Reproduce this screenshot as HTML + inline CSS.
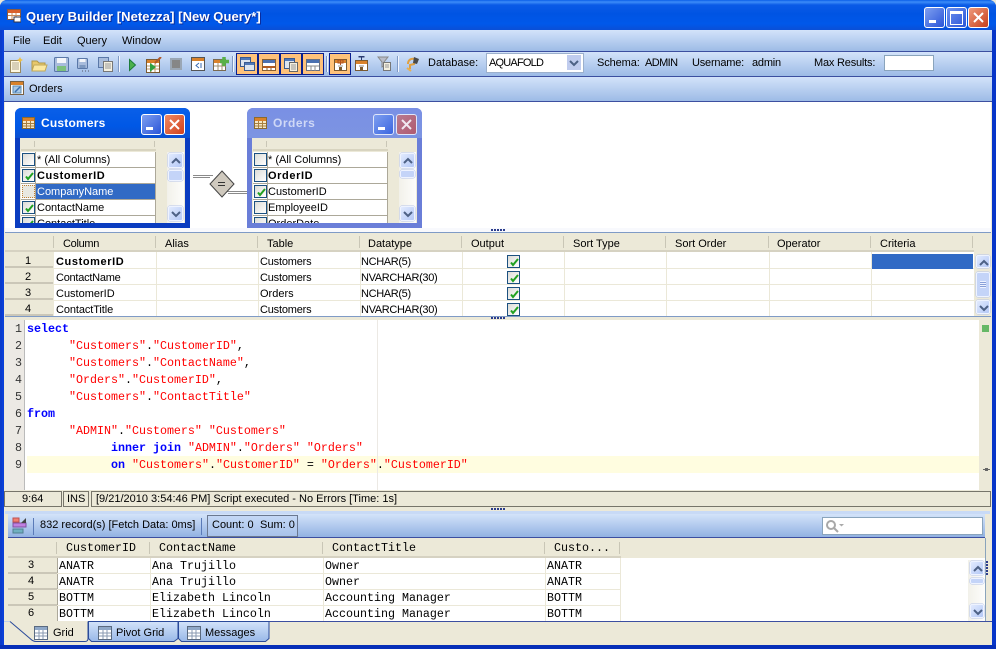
<!DOCTYPE html>
<html><head><meta charset="utf-8"><style>
html,body{margin:0;padding:0;width:996px;height:649px;overflow:hidden;background:#ece9d8}
body{position:relative;font:11px/16px "Liberation Sans",sans-serif;color:#000}
div,span.t,svg{position:absolute}
.t{position:absolute;white-space:pre;line-height:16px;height:16px;margin-top:1px}
.m{font-family:"Liberation Mono",monospace;font-size:11.67px}
.b{font-weight:bold;letter-spacing:.6px}
.n{letter-spacing:-.35px}
.bar{left:4px;width:988px;background:linear-gradient(#d3e3fa,#9dbbe6)}
.ln{background:#3c4fa0;height:1px;left:4px;width:988px}
.hd{background:#ece9d8}
.vs{width:1px;background:#ebe8d8}
.hs{height:1px;background:#ebe8d8}
.sep{width:1px;height:12px;background:#c9c6b6}
.ts{width:1px;height:16px;top:56px;background:#7f99c4;box-shadow:1px 0 #f2f6ff}
.sb{background:linear-gradient(90deg,#f2f1ea,#fdfdfb)}
.btn{width:14px;height:14px;background:linear-gradient(135deg,#e1eafe,#b4c8f6);border:1px solid #eef3ff;border-radius:2px;box-sizing:border-box;box-shadow:0 0 0 .5px #b6c4e8}
.w15{width:15px;height:15px}
.btn svg{left:2px;top:3px}
.cb{width:13px;height:13px;box-sizing:border-box;border:1px solid #1c5180;background:linear-gradient(135deg,#dcdcd7,#fff)}
.cb svg{left:1px;top:1px}
.dots{width:14px;height:2px;background:repeating-linear-gradient(90deg,#2b3c8c 0 2px,transparent 2px 3px)}
.on{width:22px;height:22px;box-sizing:border-box;border:1px solid #0a1f8f;background:#ffc27a;top:53px}
.code{color:#f00}
.kw{color:#00f;font-weight:bold}
.dk{color:#000}
.tb{width:16px;height:16px}
</style></head><body>
<svg width="0" height="0" style="position:absolute"><defs>
<linearGradient id="tg" x1="0" y1="0" x2="0" y2="1"><stop offset="0" stop-color="#d3e3fa"/><stop offset="1" stop-color="#98b8e8"/></linearGradient>
<symbol id="chk" viewBox="0 0 11 11"><path d="M2 5.500l2 2.500 5-6" fill="none" stroke="#21a121" stroke-width="2"/></symbol>
<symbol id="up" viewBox="0 0 10 8"><path d="M1 6l4-4 4 4" fill="none" stroke="#4d6185" stroke-width="2"/></symbol>
<symbol id="dn" viewBox="0 0 10 8"><path d="M1 2l4 4 4-4" fill="none" stroke="#4d6185" stroke-width="2"/></symbol>
<symbol id="win" viewBox="0 0 16 16"><rect x="1.500" y="1.500" width="13" height="13" fill="#fff" stroke="#5a6a80"/><rect x="2" y="2" width="12" height="3" fill="#8fa8c8"/><path d="M2 8h12M2 11h12M6 5v9M10 5v9" stroke="#8a9ab0" fill="none"/></symbol>
</defs></svg>

<!-- frame -->
<div style="left:0;top:0;width:996px;height:649px;background:#0a3fd8;border-radius:7px 7px 0 0"></div>
<div style="left:0;top:0;width:996px;height:30px;background:linear-gradient(#0a5fe8 0,#3c8cf8 2px,#0a5ae6 5px,#0054e3 14px,#0058ea 24px,#0a4fd6 30px);border-radius:7px 7px 0 0"></div>
<div style="left:0;top:30px;width:2px;height:619px;background:#0a3ccc"></div>
<div style="left:992px;top:30px;width:4px;height:619px;background:#0735c8"></div>
<div style="left:0;top:645px;width:996px;height:4px;background:#062fb8"></div>
<div style="left:4px;top:30px;width:988px;height:615px;background:#ece9d8"></div>

<svg style="left:7px;top:9px" width="14" height="14" viewBox="0 0 14 14"><rect x=".5" y=".5" width="13" height="10" fill="#fff" stroke="#8a5a40"/><rect x="1" y="1" width="12" height="3" fill="#d9602b"/><path d="M1 6.500h12M5 4v6M9 4v6" stroke="#c88a5a"/><rect x="7" y="8" width="7" height="5" fill="#fff" stroke="#334"/></svg>
<span class="t" style="left:26px;top:8px;font-size:13px;font-weight:bold;color:#fff;text-shadow:1px 1px #0a2c9c;letter-spacing:.08px">Query Builder [Netezza] [New Query*]</span>

<!-- caption buttons -->
<div style="left:924px;top:7px;width:19px;height:19px;background:linear-gradient(135deg,#7f9ff0,#2a55d8);border:1px solid #fff;border-radius:3px"><div style="left:4px;top:12px;width:7px;height:3px;background:#fff"></div></div>
<div style="left:946px;top:7px;width:19px;height:19px;background:linear-gradient(135deg,#6f92ee,#2a55d8);border:1px solid #fff;border-radius:3px"><div style="left:3px;top:3px;width:11px;height:10px;border:1px solid #fff;border-top:3px solid #fff"></div></div>
<div style="left:968px;top:7px;width:19px;height:19px;background:linear-gradient(135deg,#ee9a7c,#c8401c);border:1px solid #fff;border-radius:3px"><svg style="left:4px;top:4px" width="11" height="11"><path d="M1 1l9 9M10 1l-9 9" stroke="#fff" stroke-width="2"/></svg></div>

<!-- bars -->
<div class="bar" style="top:30px;height:21px"></div><div class="ln" style="top:51px"></div>
<div class="bar" style="top:52px;height:24px"></div><div class="ln" style="top:76px"></div>
<div class="bar" style="top:77px;height:24px"></div><div class="ln" style="top:101px"></div>
<span class="t" style="left:13px;top:32px">File</span>
<span class="t" style="left:43px;top:32px">Edit</span>
<span class="t" style="left:77px;top:32px">Query</span>
<span class="t" style="left:122px;top:32px">Window</span>

<!-- toolbar icons -->
<svg style="left:10px;top:57px" width="14" height="16"><rect x=".5" y="3.500" width="10" height="12" fill="#fff8e0" stroke="#9a8a60"/><path d="M2 6h7M2 8h7M2 10h7M2 12h7" stroke="#b0a890"/><path d="M10 0l1 2 2 1-2 1-1 2-1-2-2-1 2-1z" fill="#f0c040"/></svg>
<svg style="left:31px;top:58px" width="17" height="14"><path d="M1 3h5l2 2h6v8H1z" fill="#e8c86a" stroke="#b09848"/><path d="M3 7h13l-2 6H1z" fill="#fbe8a0" stroke="#c0a858"/></svg>
<svg style="left:54px;top:57px" width="15" height="15"><rect x=".5" y=".5" width="14" height="14" rx="1" fill="#a8bcdc" stroke="#5a78a8"/><rect x="3" y="1" width="9" height="5" fill="#f4f6fa"/><rect x="3" y="9" width="9" height="5" fill="#7cc07c"/></svg>
<svg style="left:77px;top:58px" width="15" height="15"><rect x=".5" y=".5" width="10" height="10" rx="1" fill="#a8bcdc" stroke="#5a78a8"/><rect x="2.500" y="1" width="6" height="3" fill="#f4f6fa"/><rect x="2.500" y="7" width="6" height="3" fill="#7c98c0"/><path d="M5 13h1M8 13h1M11 13h1" stroke="#556"/></svg>
<svg style="left:98px;top:57px" width="16" height="16"><rect x=".5" y=".5" width="10" height="10" fill="#a8bcdc" stroke="#5a78a8"/><rect x="5.500" y="4.500" width="9" height="10" fill="#f4f0e0" stroke="#777"/><path d="M7 7h6M7 9h6M7 11h6" stroke="#999"/></svg>
<div class="ts" style="left:118px"></div>
<svg style="left:128px;top:58px" width="9" height="14"><path d="M1.500 1.500l6 5.500-6 5.500z" fill="#4cb04c" stroke="#1c7c3c"/></svg>
<svg style="left:146px;top:57px" width="16" height="16"><rect x=".5" y="2.500" width="13" height="13" fill="#fff" stroke="#7a5a30"/><rect x="1" y="3" width="12" height="3" fill="#d9822b"/><path d="M1 9h12M1 12h12M5 6v9M9 6v9" stroke="#c09a6a"/><path d="M4 6l6 4-6 5z" fill="#30a040"/><path d="M9 6l6-6" stroke="#b05a2a" stroke-width="2"/></svg>
<svg style="left:170px;top:58px" width="12" height="12"><rect width="12" height="12" fill="#9aa6b4"/><rect x="2" y="2" width="8" height="8" fill="#868686"/></svg>
<svg style="left:191px;top:57px" width="14" height="14"><rect x=".5" y=".5" width="13" height="13" fill="#fff" stroke="#555"/><rect x="1" y="1" width="12" height="3" fill="#d9822b"/><path d="M8 6L5 8.500l3 2.500M10 6v5" stroke="#3a6ab0" fill="none"/></svg>
<svg style="left:213px;top:56px" width="16" height="16"><rect x=".5" y="3.500" width="12" height="11" fill="#fff" stroke="#7a6a50"/><rect x="1" y="4" width="11" height="3" fill="#d9822b"/><path d="M1 10h12M5 7v7M9 7v7" stroke="#a09070"/><path d="M11 1v9M7 5.500h9" stroke="#58b048" stroke-width="3.500"/></svg>
<div class="ts" style="left:232px"></div>

<div class="on" style="left:236px"><svg style="left:3px;top:3px" width="16" height="16"><rect x=".5" y=".5" width="10" height="9" fill="#dce4f0" stroke="#3a5a90"/><rect x="1" y="1" width="9" height="2" fill="#5078b8"/><rect x="4.500" y="5.500" width="10" height="8" fill="#dce4f0" stroke="#3a5a90"/><rect x="5" y="6" width="9" height="2" fill="#5078b8"/></svg></div>
<div class="on" style="left:258px"><svg style="left:3px;top:3px" width="16" height="16"><rect x=".5" y="2.500" width="13" height="11" fill="#fff" stroke="#8a6030"/><rect x="1" y="3" width="12" height="3" fill="#4a70b0"/><rect x="1" y="9" width="12" height="2" fill="#b05a20"/><path d="M5 11v3M9 11v3" stroke="#8a6030"/></svg></div>
<div class="on" style="left:280px"><svg style="left:3px;top:3px" width="16" height="16"><rect x=".5" y="1.500" width="10" height="10" fill="#dce4f0" stroke="#3a5a90"/><rect x="1" y="2" width="9" height="2" fill="#5078b8"/><rect x="5.500" y="5.500" width="8" height="9" fill="#f4f0e0" stroke="#666"/><path d="M7 8h5M7 10h5M7 12h5" stroke="#999"/></svg></div>
<div class="on" style="left:302px"><svg style="left:3px;top:3px" width="16" height="16"><rect x=".5" y="2.500" width="13" height="11" fill="#fff" stroke="#6a7080"/><rect x="1" y="3" width="12" height="3" fill="#4a70b0"/><path d="M1 9h12M5 9v5M9 9v5" stroke="#8a8a8a"/></svg></div>
<div class="ts" style="left:326px"></div>
<div class="on" style="left:329px"><svg style="left:3px;top:3px" width="16" height="16"><rect x="1.500" y="2.500" width="12" height="11" fill="#fff" stroke="#7a5a30"/><rect x="2" y="3" width="11" height="3" fill="#d9822b"/><path d="M7.500 3v5M5 3h5v3H5z" stroke="#b05020" fill="none"/><path d="M5 9h5" stroke="#999"/><rect x="6" y="10" width="3" height="3" fill="#7a5a30"/></svg></div>
<svg style="left:354px;top:56px" width="16" height="16"><rect x="1.500" y="4.500" width="12" height="10" fill="#fff" stroke="#7a5a30"/><rect x="2" y="5" width="11" height="3" fill="#d9822b"/><path d="M5 0h5v1H5zM7.500 1v3" stroke="#2a3a70"/><path d="M5 10h5" stroke="#888"/><rect x="6" y="11" width="3" height="3" fill="#7a5a30"/></svg>
<svg style="left:377px;top:56px" width="16" height="16"><path d="M1 1h10L7 6v4L5 11V6z" fill="#b8bcc8" stroke="#888"/><rect x="6.500" y="6.500" width="7" height="8" fill="#f4f0e0" stroke="#777"/><path d="M8 9h4M8 11h4" stroke="#999"/></svg>
<div class="ts" style="left:397px"></div>
<svg style="left:405px;top:55px" width="16" height="17"><path d="M3 9c0-4 3-6 7-5l-1 5-4 1 0 4" fill="none" stroke="#e0a040" stroke-width="2"/><path d="M9 2l5 2-2 5-4-1z" fill="#4a4a4a"/><path d="M2 13l4 3" stroke="#e8b050" stroke-width="2"/></svg>

<span class="t" style="left:428px;top:54px">Database:</span>
<div style="left:486px;top:53px;width:96px;height:18px;background:#fff;border:1px solid #9cb0cc"></div>
<span class="t" style="left:489px;top:54px;letter-spacing:-.8px">AQUAFOLD</span>
<div style="left:567px;top:55px;width:14px;height:15px;background:#c0ccee"><svg style="left:2px;top:4px" width="10" height="8"><use href="#dn"/></svg></div>
<span class="t" style="left:597px;top:54px;letter-spacing:-.1px">Schema:</span>
<span class="t" style="left:645px;top:54px;letter-spacing:-.6px">ADMIN</span>
<span class="t" style="left:692px;top:54px;letter-spacing:-.2px">Username:</span>
<span class="t" style="left:752px;top:54px;letter-spacing:-.2px">admin</span>
<span class="t" style="left:814px;top:54px;letter-spacing:-.2px">Max Results:</span>
<div style="left:884px;top:55px;width:48px;height:14px;background:#fff;border:1px solid #8aa4bc"></div>

<svg style="left:10px;top:81px" width="15" height="15"><rect x=".5" y=".5" width="13" height="13" fill="#fff" stroke="#7a6040"/><rect x="1" y="1" width="12" height="3" fill="#d9822b"/><rect x="3" y="5" width="8" height="7" fill="#a8c8e8" stroke="#5a8ab0"/><path d="M5 11l5-5" stroke="#3a70b0" stroke-width="1.500"/></svg>
<span class="t" style="left:29px;top:80px">Orders</span>

<!-- canvas -->
<div style="left:5px;top:102px;width:986px;height:126px;background:#fff"></div>

<!-- customers window -->
<div style="left:15px;top:108px;width:175px;height:120px;background:#0a3cc0;border-radius:6px 6px 0 0"></div>
<div style="left:15px;top:108px;width:175px;height:30px;background:linear-gradient(#0a5fe8,#0058e6 60%,#0a4fd0);border-radius:6px 6px 0 0"></div>
<svg style="left:22px;top:117px" width="13" height="12"><rect x=".5" y=".5" width="12" height="11" fill="#f4e8c8" stroke="#8a6a30"/><rect x="1" y="1" width="11" height="3" fill="#d9822b"/><path d="M1 6.500h11M1 9h11M4.500 4v7M8.500 4v7" stroke="#a88040"/></svg>
<span class="t" style="left:41px;top:114px;font-size:12px;font-weight:bold;color:#fff;letter-spacing:.2px">Customers</span>
<div style="left:141px;top:114px;width:19px;height:19px;background:linear-gradient(135deg,#7f9ff0,#2a55d8);border:1px solid #fff;border-radius:3px"><div style="left:4px;top:12px;width:7px;height:3px;background:#fff"></div></div>
<div style="left:164px;top:114px;width:19px;height:19px;background:linear-gradient(135deg,#ee8a64,#d0401c);border:1px solid #fff;border-radius:3px"><svg style="left:4px;top:4px" width="11" height="11"><path d="M1 1l9 9M10 1l-9 9" stroke="#fff" stroke-width="2"/></svg></div>
<div style="left:20px;top:138px;width:165px;height:85px;background:#ece9d8"></div>
<div style="left:21px;top:152px;width:135px;height:71px;background:#fff"></div>
<div style="left:21px;top:149px;width:135px;height:2px;background:#d8d4c0"></div>
<div class="sep" style="left:34px;top:141px;height:6px"></div>
<div class="sep" style="left:154px;top:141px;height:6px"></div>
<div style="left:21px;top:167px;width:135px;height:1px;background:#aca899"></div>
<div style="left:21px;top:183px;width:135px;height:1px;background:#aca899"></div>
<div style="left:21px;top:199px;width:135px;height:1px;background:#aca899"></div>
<div style="left:21px;top:215px;width:135px;height:1px;background:#aca899"></div>
<div style="left:35px;top:152px;width:1px;height:71px;background:#aca899"></div>
<div style="left:155px;top:152px;width:1px;height:71px;background:#aca899"></div>
<div style="left:36px;top:184px;width:119px;height:15px;background:#316ac5"></div>
<span class="t" style="left:37px;top:151px">* (All Columns)</span>
<span class="t b" style="left:37px;top:167px">CustomerID</span>
<span class="t" style="left:37px;top:183px;color:#fff">CompanyName</span>
<span class="t" style="left:37px;top:199px">ContactName</span>
<div style="left:36px;top:216px;width:90px;height:7px;overflow:hidden"><span class="t" style="left:1px;top:-1px">ContactTitle</span></div>
<div class="cb" style="left:22px;top:153px"></div>
<div class="cb" style="left:22px;top:169px"><svg width="11" height="11"><use href="#chk"/></svg></div>
<div class="cb" style="left:22px;top:185px;border:1px dotted #c08030;background:#e8e8e0"></div>
<div class="cb" style="left:22px;top:201px"><svg width="11" height="11"><use href="#chk"/></svg></div>
<div style="left:22px;top:217px;width:13px;height:6px;overflow:hidden"><div class="cb" style="left:0;top:0"><svg width="11" height="11"><use href="#chk"/></svg></div></div>
<div class="sb" style="left:167px;top:152px;width:17px;height:71px"></div>
<div class="btn w15" style="left:168px;top:153px"><svg width="10" height="8"><use href="#up"/></svg></div>
<div class="btn" style="left:168px;top:170px;width:15px;height:11px;background:#c4d4f8"></div>
<div class="btn w15" style="left:168px;top:206px"><svg width="10" height="8"><use href="#dn"/></svg></div>

<!-- orders window -->
<div style="left:247px;top:108px;width:175px;height:120px;background:#6a7ed8;border-radius:6px 6px 0 0"></div>
<div style="left:247px;top:108px;width:175px;height:30px;background:linear-gradient(#7a90e4,#7c94e2);border-radius:6px 6px 0 0"></div>
<svg style="left:254px;top:117px" width="13" height="12"><rect x=".5" y=".5" width="12" height="11" fill="#f4e8c8" stroke="#8a6a30"/><rect x="1" y="1" width="11" height="3" fill="#d9822b"/><path d="M1 6.500h11M1 9h11M4.500 4v7M8.500 4v7" stroke="#a88040"/></svg>
<span class="t" style="left:273px;top:114px;font-size:12px;font-weight:bold;color:#cfd8f6;letter-spacing:.5px">Orders</span>
<div style="left:373px;top:114px;width:19px;height:19px;background:linear-gradient(135deg,#7f9ff0,#3a65e0);border:1px solid #dfe6fa;border-radius:3px"><div style="left:4px;top:12px;width:7px;height:3px;background:#fff"></div></div>
<div style="left:396px;top:114px;width:19px;height:19px;background:linear-gradient(135deg,#b87a90,#b05a70);border:1px solid #dfe6fa;border-radius:3px"><svg style="left:4px;top:4px" width="11" height="11"><path d="M1 1l9 9M10 1l-9 9" stroke="#f0e8f0" stroke-width="2"/></svg></div>
<div style="left:252px;top:138px;width:165px;height:85px;background:#ece9d8"></div>
<div style="left:253px;top:152px;width:135px;height:71px;background:#fff"></div>
<div style="left:253px;top:149px;width:135px;height:2px;background:#d8d4c0"></div>
<div class="sep" style="left:266px;top:141px;height:6px"></div>
<div class="sep" style="left:386px;top:141px;height:6px"></div>
<div style="left:253px;top:167px;width:135px;height:1px;background:#aca899"></div>
<div style="left:253px;top:183px;width:135px;height:1px;background:#aca899"></div>
<div style="left:253px;top:199px;width:135px;height:1px;background:#aca899"></div>
<div style="left:253px;top:215px;width:135px;height:1px;background:#aca899"></div>
<div style="left:267px;top:152px;width:1px;height:71px;background:#aca899"></div>
<div style="left:387px;top:152px;width:1px;height:71px;background:#aca899"></div>
<span class="t" style="left:268px;top:151px">* (All Columns)</span>
<span class="t b" style="left:268px;top:167px">OrderID</span>
<span class="t" style="left:268px;top:183px">CustomerID</span>
<span class="t" style="left:268px;top:199px">EmployeeID</span>
<div style="left:268px;top:216px;width:90px;height:7px;overflow:hidden"><span class="t" style="left:0;top:-1px">OrderDate</span></div>
<div class="cb" style="left:254px;top:153px"></div>
<div class="cb" style="left:254px;top:169px"></div>
<div class="cb" style="left:254px;top:185px"><svg width="11" height="11"><use href="#chk"/></svg></div>
<div class="cb" style="left:254px;top:201px"></div>
<div style="left:254px;top:217px;width:13px;height:6px;overflow:hidden"><div class="cb" style="left:0;top:0"></div></div>
<div class="sb" style="left:399px;top:152px;width:17px;height:71px"></div>
<div class="btn w15" style="left:400px;top:153px"><svg width="10" height="8"><use href="#up"/></svg></div>
<div class="btn" style="left:400px;top:170px;width:15px;height:8px;background:#c4d4f8"></div>
<div class="btn w15" style="left:400px;top:206px"><svg width="10" height="8"><use href="#dn"/></svg></div>

<!-- join -->
<svg style="left:190px;top:168px" width="60" height="32"><path d="M3 7.500h20M3 9.500h17M36 23.500h21M38 25.500h19" stroke="#8a8a8a" fill="none"/><path d="M32 3l12 13-12 13-12-13z" fill="#cfc9be" stroke="#444"/><path d="M28 14.500h7M28 17.500h7" stroke="#333"/></svg>

<!-- splitter 1 -->
<div style="left:5px;top:228px;width:986px;height:5px;background:#f8f9fd"></div>
<div style="left:5px;top:232px;width:986px;height:1px;background:#7f9bc6"></div>
<div class="dots" style="left:491px;top:229px"></div>

<!-- query grid -->
<div class="hd" style="left:5px;top:233px;width:986px;height:83px"></div>
<div style="left:54px;top:252px;width:920px;height:64px;background:#fff"></div>
<div style="left:5px;top:250px;width:969px;height:2px;background:#d6d2c2"></div>
<div class="hs" style="left:54px;top:268px;width:920px"></div>
<div class="hs" style="left:54px;top:284px;width:920px"></div>
<div class="hs" style="left:54px;top:300px;width:920px"></div>
<div class="vs" style="left:156px;top:252px;height:64px"></div>
<div class="vs" style="left:258px;top:252px;height:64px"></div>
<div class="vs" style="left:360px;top:252px;height:64px"></div>
<div class="vs" style="left:462px;top:252px;height:64px"></div>
<div class="vs" style="left:564px;top:252px;height:64px"></div>
<div class="vs" style="left:666px;top:252px;height:64px"></div>
<div class="vs" style="left:769px;top:252px;height:64px"></div>
<div class="vs" style="left:871px;top:252px;height:64px"></div>
<div class="sep" style="left:53px;top:236px"></div>
<div class="sep" style="left:155px;top:236px"></div>
<div class="sep" style="left:257px;top:236px"></div>
<div class="sep" style="left:359px;top:236px"></div>
<div class="sep" style="left:461px;top:236px"></div>
<div class="sep" style="left:563px;top:236px"></div>
<div class="sep" style="left:665px;top:236px"></div>
<div class="sep" style="left:768px;top:236px"></div>
<div class="sep" style="left:870px;top:236px"></div>
<div class="sep" style="left:972px;top:236px"></div>
<span class="t" style="left:63px;top:235px;letter-spacing:-.3px">Column</span>
<span class="t" style="left:165px;top:235px">Alias</span>
<span class="t" style="left:267px;top:235px">Table</span>
<span class="t" style="left:368px;top:235px">Datatype</span>
<span class="t" style="left:471px;top:235px">Output</span>
<span class="t" style="left:573px;top:235px">Sort Type</span>
<span class="t" style="left:675px;top:235px">Sort Order</span>
<span class="t" style="left:777px;top:235px">Operator</span>
<span class="t" style="left:880px;top:235px">Criteria</span>
<div style="left:5px;top:266px;width:48px;height:2px;background:#cbc7b8"></div>
<div style="left:5px;top:282px;width:48px;height:2px;background:#cbc7b8"></div>
<div style="left:5px;top:298px;width:48px;height:2px;background:#cbc7b8"></div>
<div style="left:5px;top:314px;width:48px;height:2px;background:#cbc7b8"></div>
<span class="t" style="left:25px;top:252px">1</span>
<span class="t" style="left:25px;top:268px">2</span>
<span class="t" style="left:25px;top:284px">3</span>
<span class="t" style="left:25px;top:300px">4</span>
<span class="t b" style="left:56px;top:253px">CustomerID</span>
<span class="t" style="left:56px;top:269px;letter-spacing:-.25px">ContactName</span>
<span class="t" style="left:56px;top:285px">CustomerID</span>
<span class="t" style="left:56px;top:301px;letter-spacing:-.1px">ContactTitle</span>
<span class="t" style="left:260px;top:253px;letter-spacing:-.2px">Customers</span>
<span class="t" style="left:260px;top:269px;letter-spacing:-.2px">Customers</span>
<span class="t" style="left:260px;top:285px">Orders</span>
<span class="t" style="left:260px;top:301px;letter-spacing:-.2px">Customers</span>
<span class="t n" style="left:361px;top:253px">NCHAR(5)</span>
<span class="t n" style="left:361px;top:269px">NVARCHAR(30)</span>
<span class="t n" style="left:361px;top:285px">NCHAR(5)</span>
<span class="t n" style="left:361px;top:301px">NVARCHAR(30)</span>
<div class="cb" style="left:507px;top:255px"><svg width="11" height="11"><use href="#chk"/></svg></div>
<div class="cb" style="left:507px;top:271px"><svg width="11" height="11"><use href="#chk"/></svg></div>
<div class="cb" style="left:507px;top:287px"><svg width="11" height="11"><use href="#chk"/></svg></div>
<div class="cb" style="left:507px;top:303px"><svg width="11" height="11"><use href="#chk"/></svg></div>
<div style="left:872px;top:254px;width:101px;height:15px;background:#316ac5"></div>
<div class="btn" style="left:976px;top:255px;height:13px"><svg width="10" height="8"><use href="#up"/></svg></div>
<div class="btn" style="left:976px;top:272px;height:25px;background:#c4d4f8"><div style="left:3px;top:8px;width:6px;height:7px;background:repeating-linear-gradient(#eef3ff 0 1px,#8aa0d8 1px 2px)"></div></div>
<div class="btn" style="left:976px;top:300px"><svg width="10" height="8"><use href="#dn"/></svg></div>

<!-- splitter 2 -->
<div style="left:5px;top:316px;width:986px;height:1px;background:#7f9bc6"></div>
<div class="dots" style="left:491px;top:317px"></div>

<!-- editor -->
<div style="left:5px;top:320px;width:974px;height:170px;background:#fff"></div>
<div style="left:5px;top:320px;width:19px;height:170px;background:#ece9e4"></div>
<div style="left:24px;top:320px;width:1px;height:170px;background:#bbb"></div>
<div style="left:979px;top:320px;width:12px;height:170px;background:#ece9d8"></div>
<div style="left:982px;top:325px;width:7px;height:7px;background:#66b866"></div>
<div style="left:983px;top:469px;width:7px;height:1px;background:#666"></div>
<div style="left:985px;top:468px;width:3px;height:3px;background:#666"></div>
<div style="left:27px;top:456px;width:952px;height:17px;background:#fffde0"></div>
<div style="left:377px;top:320px;width:1px;height:170px;background:#ece9e4"></div>
<span class="t m" style="left:15px;top:320px;color:#333">1</span>
<span class="t m" style="left:15px;top:337px;color:#333">2</span>
<span class="t m" style="left:15px;top:354px;color:#333">3</span>
<span class="t m" style="left:15px;top:371px;color:#333">4</span>
<span class="t m" style="left:15px;top:388px;color:#333">5</span>
<span class="t m" style="left:15px;top:405px;color:#333">6</span>
<span class="t m" style="left:15px;top:422px;color:#333">7</span>
<span class="t m" style="left:15px;top:439px;color:#333">8</span>
<span class="t m" style="left:15px;top:456px;color:#333">9</span>
<span class="t m kw" style="left:27px;top:320px">select</span>
<span class="t m code" style="left:69px;top:337px">"Customers"<span class="dk">.</span>"CustomerID"<span class="dk">,</span></span>
<span class="t m code" style="left:69px;top:354px">"Customers"<span class="dk">.</span>"ContactName"<span class="dk">,</span></span>
<span class="t m code" style="left:69px;top:371px">"Orders"<span class="dk">.</span>"CustomerID"<span class="dk">,</span></span>
<span class="t m code" style="left:69px;top:388px">"Customers"<span class="dk">.</span>"ContactTitle"</span>
<span class="t m kw" style="left:27px;top:405px">from</span>
<span class="t m code" style="left:69px;top:422px">"ADMIN"<span class="dk">.</span>"Customers" "Customers"</span>
<span class="t m code" style="left:111px;top:439px"><span class="kw">inner join</span> "ADMIN"<span class="dk">.</span>"Orders" "Orders"</span>
<span class="t m code" style="left:111px;top:456px"><span class="kw">on</span> "Customers"<span class="dk">.</span>"CustomerID" <span class="dk">=</span> "Orders"<span class="dk">.</span>"CustomerID"</span>

<!-- status bar -->
<div style="left:4px;top:490px;width:988px;height:21px;background:#ece9d8"></div>
<div style="left:4px;top:491px;width:56px;height:14px;border:1px solid #77756a"></div>
<div style="left:63px;top:491px;width:24px;height:14px;border:1px solid #77756a"></div>
<div style="left:91px;top:491px;width:898px;height:14px;border:1px solid #77756a"></div>
<span class="t" style="left:22px;top:490px">9:64</span>
<span class="t" style="left:67px;top:490px">INS</span>
<span class="t" style="left:96px;top:490px">[9/21/2010 3:54:46 PM] Script executed - No Errors [Time: 1s]</span>
<div class="dots" style="left:491px;top:508px"></div>

<!-- results -->
<div style="left:5px;top:511px;width:985px;height:3px;background:#c8daf6"></div>
<div style="left:8px;top:514px;width:977px;height:23px;background:linear-gradient(#d3e3fa,#92b2e2)"></div>
<div style="left:8px;top:537px;width:977px;height:1px;background:#3c4fa0"></div>
<svg style="left:12px;top:517px" width="17" height="19"><rect x="1" y="1" width="6" height="4" fill="#f08070" stroke="#c05050"/><rect x="1" y="6" width="13" height="4" fill="#c080e0" stroke="#8050a0"/><rect x="1" y="12" width="10" height="4" fill="#70b0c0" stroke="#508090"/><path d="M14 1v5l-5 0z" fill="#444"/></svg>
<div style="left:33px;top:518px;width:1px;height:17px;background:#5a7ab8"></div>
<span class="t" style="left:40px;top:516px">832 record(s) [Fetch Data: 0ms]</span>
<div style="left:201px;top:518px;width:1px;height:17px;background:#5a7ab8"></div>
<div style="left:207px;top:515px;width:89px;height:20px;border:1px solid #6a7890;background:linear-gradient(#c4d8f6,#a8c2ea)"></div>
<span class="t" style="left:212px;top:516px">Count: 0</span>
<span class="t" style="left:260px;top:516px">Sum: 0</span>
<div style="left:822px;top:517px;width:159px;height:16px;background:#fff;border:1px solid #8aa4bc"></div>
<svg style="left:825px;top:519px" width="20" height="14"><circle cx="6" cy="6" r="4" fill="none" stroke="#a8a8a8" stroke-width="2"/><path d="M9 9l4 4" stroke="#a8a8a8" stroke-width="2"/><path d="M14 5h5l-2.500 2.500z" fill="#aaa"/></svg>

<div class="hd" style="left:8px;top:538px;width:977px;height:20px;border-right:1px solid #8aa4bc"></div>
<div style="left:8px;top:558px;width:49px;height:63px;background:#ece9d8"></div>
<div style="left:57px;top:558px;width:928px;height:63px;background:#fff;border-right:1px solid #8aa4bc"></div>
<div style="left:57px;top:558px;width:1px;height:63px;background:#aca899"></div>
<div class="vs" style="left:150px;top:558px;height:63px"></div>
<div class="vs" style="left:323px;top:558px;height:63px"></div>
<div class="vs" style="left:545px;top:558px;height:63px"></div>
<div class="vs" style="left:620px;top:558px;height:63px"></div>
<div class="hs" style="left:57px;top:573px;width:564px"></div>
<div class="hs" style="left:57px;top:589px;width:564px"></div>
<div class="hs" style="left:57px;top:605px;width:564px"></div>
<div class="sep" style="left:56px;top:542px"></div>
<div class="sep" style="left:149px;top:542px"></div>
<div class="sep" style="left:322px;top:542px"></div>
<div class="sep" style="left:544px;top:542px"></div>
<div class="sep" style="left:619px;top:542px"></div>
<div style="left:8px;top:556px;width:613px;height:2px;background:#d6d2c2"></div>
<span class="t m" style="left:66px;top:539px">CustomerID</span>
<span class="t m" style="left:159px;top:539px">ContactName</span>
<span class="t m" style="left:332px;top:539px">ContactTitle</span>
<span class="t m" style="left:554px;top:539px">Custo...</span>
<div style="left:8px;top:572px;width:49px;height:2px;background:#cbc7b8"></div>
<div style="left:8px;top:588px;width:49px;height:2px;background:#cbc7b8"></div>
<div style="left:8px;top:604px;width:49px;height:2px;background:#cbc7b8"></div>
<span class="t" style="left:28px;top:556px">3</span>
<span class="t" style="left:28px;top:572px">4</span>
<span class="t" style="left:28px;top:588px">5</span>
<span class="t" style="left:28px;top:604px">6</span>
<span class="t m" style="left:59px;top:557px">ANATR</span><span class="t m" style="left:152px;top:557px">Ana Trujillo</span><span class="t m" style="left:325px;top:557px">Owner</span><span class="t m" style="left:547px;top:557px">ANATR</span>
<span class="t m" style="left:59px;top:573px">ANATR</span><span class="t m" style="left:152px;top:573px">Ana Trujillo</span><span class="t m" style="left:325px;top:573px">Owner</span><span class="t m" style="left:547px;top:573px">ANATR</span>
<span class="t m" style="left:59px;top:589px">BOTTM</span><span class="t m" style="left:152px;top:589px">Elizabeth Lincoln</span><span class="t m" style="left:325px;top:589px">Accounting Manager</span><span class="t m" style="left:547px;top:589px">BOTTM</span>
<span class="t m" style="left:59px;top:605px">BOTTM</span><span class="t m" style="left:152px;top:605px">Elizabeth Lincoln</span><span class="t m" style="left:325px;top:605px">Accounting Manager</span><span class="t m" style="left:547px;top:605px">BOTTM</span>
<div class="sb" style="left:968px;top:560px;width:17px;height:61px"></div>
<div class="btn" style="left:970px;top:561px"><svg width="10" height="8"><use href="#up"/></svg></div>
<div class="btn" style="left:970px;top:578px;height:6px;background:#c4d4f8"></div>
<div class="btn" style="left:970px;top:604px"><svg width="10" height="8"><use href="#dn"/></svg></div>
<div style="left:986px;top:561px;width:2px;height:14px;background:repeating-linear-gradient(#2b3c8c 0 2px,transparent 2px 3px)"></div>

<!-- tabs -->
<div style="left:88px;top:621px;width:904px;height:1px;background:#3c4fa0"></div>
<div style="left:4px;top:621px;width:6px;height:1px;background:#c0d0e8"></div>
<svg style="left:4px;top:621px" width="280" height="24"><path d="M6 .5L26 17.500Q29 20.500 32 20.500H81Q84 20.500 84 17.500V.5" fill="none" stroke="#2a4a9a"/><path d="M84.500 .5V17.500l3 3H170l4-3V.5z" fill="url(#tg)" stroke="#2a4a9a"/><path d="M174.500 .5V17.500l3 3H261.500l3.500-3V.5z" fill="url(#tg)" stroke="#2a4a9a"/></svg>
<svg class="tb" style="left:33px;top:625px"><use href="#win"/></svg>
<span class="t" style="left:53px;top:624px">Grid</span>
<svg class="tb" style="left:97px;top:625px"><use href="#win"/></svg>
<span class="t" style="left:116px;top:624px">Pivot Grid</span>
<svg class="tb" style="left:186px;top:625px"><use href="#win"/></svg>
<span class="t" style="left:205px;top:624px">Messages</span>
</body></html>
